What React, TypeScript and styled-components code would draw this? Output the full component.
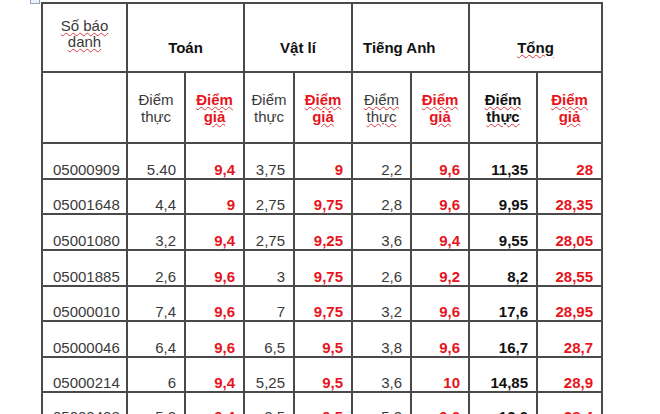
import React from "react";
import styled, { createGlobalStyle, css } from "styled-components";

const GlobalStyle = createGlobalStyle`
  html, body {
    margin: 0;
    padding: 0;
    background: #ffffff;
  }
  body {
    font-family: "Liberation Sans", Arial, sans-serif;
    overflow: hidden;
  }
`;

const Page = styled.div`
  position: relative;
  width: 660px;
  height: 414px;
  overflow: hidden;
  padding: 2px 0 0 41px;
  box-sizing: border-box;
`;

// Word's table move handle, mostly scrolled out of view
const MoveHandle = styled.div`
  position: absolute;
  left: 30px;
  top: -6px;
  width: 8px;
  height: 8px;
  border: 1px solid #8fa3c4;
  background: #eef2f8;
`;

const Table = styled.table`
  border-collapse: collapse;
  table-layout: fixed;
  width: 562px;
  font-size: 15px;
  color: #3a3a3a;
`;

type Tone = "real" | "fake" | "total";

const Cell = styled.td<{ $tone?: Tone; $align?: "left" | "right" }>`
  border: 2px solid #4a4a4a;
  padding: 0 8px 0 8px;
  line-height: 17px;
  vertical-align: bottom;
  text-align: ${(p) => p.$align ?? "right"};
  white-space: nowrap;
  ${(p) =>
    p.$tone === "fake" &&
    css`
      color: #e8141c;
      font-weight: bold;
    `}
  ${(p) =>
    p.$tone === "total" &&
    css`
      color: #111111;
      font-weight: bold;
    `}
`;

const HeadCell = styled.th<{ $pad: number; $tone?: Tone; $tight?: boolean }>`
  border: 2px solid #4a4a4a;
  padding: ${(p) => p.$pad}px 2px 0 2px;
  vertical-align: top;
  text-align: center;
  line-height: ${(p) => (p.$tight ? 16 : 17)}px;
  font-weight: ${(p) => (p.$tone === "real" ? "normal" : "bold")};
  color: ${(p) =>
    p.$tone === "fake" ? "#e8141c" : p.$tone === "real" ? "#3a3a3a" : "#111111"};
`;

const Squiggle = styled.span`
  text-decoration: underline wavy #e0393e;
  text-decoration-thickness: 1px;
  text-underline-offset: 1px;
`;

const Row = styled.tr<{ $h: number }>`
  height: ${(p) => p.$h}px;
`;

const widths = [85, 58, 59, 50, 58, 59, 58, 68, 65];

const rows: string[][] = [
  ["05000909", "5.40", "9,4", "3,75", "9", "2,2", "9,6", "11,35", "28"],
  ["05001648", "4,4", "9", "2,75", "9,75", "2,8", "9,6", "9,95", "28,35"],
  ["05001080", "3,2", "9,4", "2,75", "9,25", "3,6", "9,4", "9,55", "28,05"],
  ["05001885", "2,6", "9,6", "3", "9,75", "2,6", "9,2", "8,2", "28,55"],
  ["05000010", "7,4", "9,6", "7", "9,75", "3,2", "9,6", "17,6", "28,95"],
  ["05000046", "6,4", "9,6", "6,5", "9,5", "3,8", "9,6", "16,7", "28,7"],
  ["05000214", "6", "9,4", "5,25", "9,5", "3,6", "10", "14,85", "28,9"],
  ["05000408", "5,2", "9,4", "2,5", "9,5", "5,2", "9,6", "12,9", "28,4"],
];

const rowHeights = [36, 35, 36, 36, 35, 36, 35, 34];

const tones: Tone[] = ["real", "fake", "real", "fake", "real", "fake", "total", "fake"];

const subHeads: { tone: Tone; mark: boolean }[] = [
  { tone: "real", mark: false },
  { tone: "fake", mark: true },
  { tone: "real", mark: false },
  { tone: "fake", mark: true },
  { tone: "real", mark: true },
  { tone: "fake", mark: true },
  { tone: "total", mark: true },
  { tone: "fake", mark: true },
];

const Word = ({ mark, children }: { mark: boolean; children: string }) =>
  mark ? <Squiggle>{children}</Squiggle> : <>{children}</>;

export default function App() {
  return (
    <Page>
      <GlobalStyle />
      <MoveHandle />
      <Table>
        <colgroup>
          {widths.map((w, i) => (
            <col key={i} style={{ width: w }} />
          ))}
        </colgroup>
        <thead>
          <Row $h={69}>
            <HeadCell $pad={14} $tone="real" $tight>
              <Squiggle>Số báo</Squiggle>
              <br />
              <Squiggle>danh</Squiggle>
            </HeadCell>
            <HeadCell $pad={35} colSpan={2}>
              Toán
            </HeadCell>
            <HeadCell $pad={35} colSpan={2}>
              Vật lí
            </HeadCell>
            <HeadCell $pad={35} colSpan={2} style={{ textAlign: "left", paddingLeft: 10 }}>
              Tiếng Anh
            </HeadCell>
            <HeadCell $pad={35} colSpan={2}>
              <Squiggle>Tổng</Squiggle>
            </HeadCell>
          </Row>
          <Row $h={71}>
            <HeadCell $pad={18} $tone="real" />
            {subHeads.map((s, i) => (
              <HeadCell key={i} $pad={18} $tone={s.tone}>
                <Word mark={s.mark}>Điểm</Word>
                <br />
                <Word mark={s.mark}>{s.tone === "fake" ? "giả" : "thực"}</Word>
              </HeadCell>
            ))}
          </Row>
        </thead>
        <tbody>
          {rows.map((r, i) => (
            <Row key={r[0]} $h={rowHeights[i]}>
              <Cell $align="left" style={{ paddingLeft: 10 }}>
                {r[0]}
              </Cell>
              {r.slice(1).map((v, j) => (
                <Cell key={j} $tone={tones[j]}>
                  {v}
                </Cell>
              ))}
            </Row>
          ))}
        </tbody>
      </Table>
    </Page>
  );
}
